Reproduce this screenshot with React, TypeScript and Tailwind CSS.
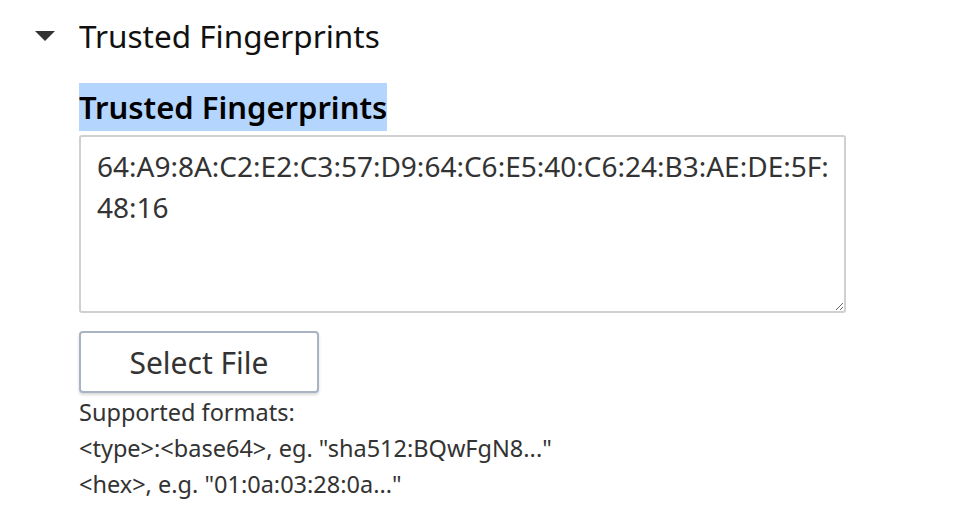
import { useState } from 'react';

const App = () => {
  const [open, setOpen] = useState(true);
  const [value, setValue] = useState(
    '64:A9:8A:C2:E2:C3:57:D9:64:C6:E5:40:C6:24:B3:AE:DE:5F:48:16'
  );

  return (
    <div className="min-h-screen bg-white font-['Noto_Sans',sans-serif] text-[#1a1a1a]">
      {/* Section header */}
      <button
        onClick={() => setOpen(!open)}
        className="flex items-center pl-[35px] pt-[16px] h-[56px]"
      >
        <svg width="20" height="10" viewBox="0 0 20 10" className="mr-[24px]">
          <polygon points="0,0 20,0 10,10" fill="#333333" />
        </svg>
        <span className="text-[31.5px] leading-[40px] text-[#111]">Trusted Fingerprints</span>
      </button>

      {open && (
        <div className="pl-[79px] pt-[27px]">
          <label className="inline-block bg-[#b4d5fe] text-[31px] font-semibold leading-[48px] text-black">
            Trusted Fingerprints
          </label>
          <textarea
            value={value}
            onChange={(e) => setValue(e.target.value)}
            className="block w-[767px] h-[178px] mt-[4px] border-2 border-[#d0d0d0] rounded-[3px] pl-[16px] pr-[10px] pt-[9px] pb-[12px] text-[28px] leading-[41px] text-[#333] resize-y outline-none"
          />
          <button className="mt-[18px] w-[240px] h-[62px] border-2 border-[#a8b4c4] rounded-[4px] bg-white shadow-[0_2px_3px_rgba(0,0,0,0.15)] text-[30px] text-[#333]">
            Select File
          </button>
          <div className="mt-[1px] text-[23.5px] leading-[36px] text-[#333]">
            <div>Supported formats:</div>
            <div>&lt;type&gt;:&lt;base64&gt;, eg. "sha512:BQwFgN8..."</div>
            <div>&lt;hex&gt;, e.g. "01:0a:03:28:0a..."</div>
          </div>
        </div>
      )}
    </div>
  );
};

export default App;
